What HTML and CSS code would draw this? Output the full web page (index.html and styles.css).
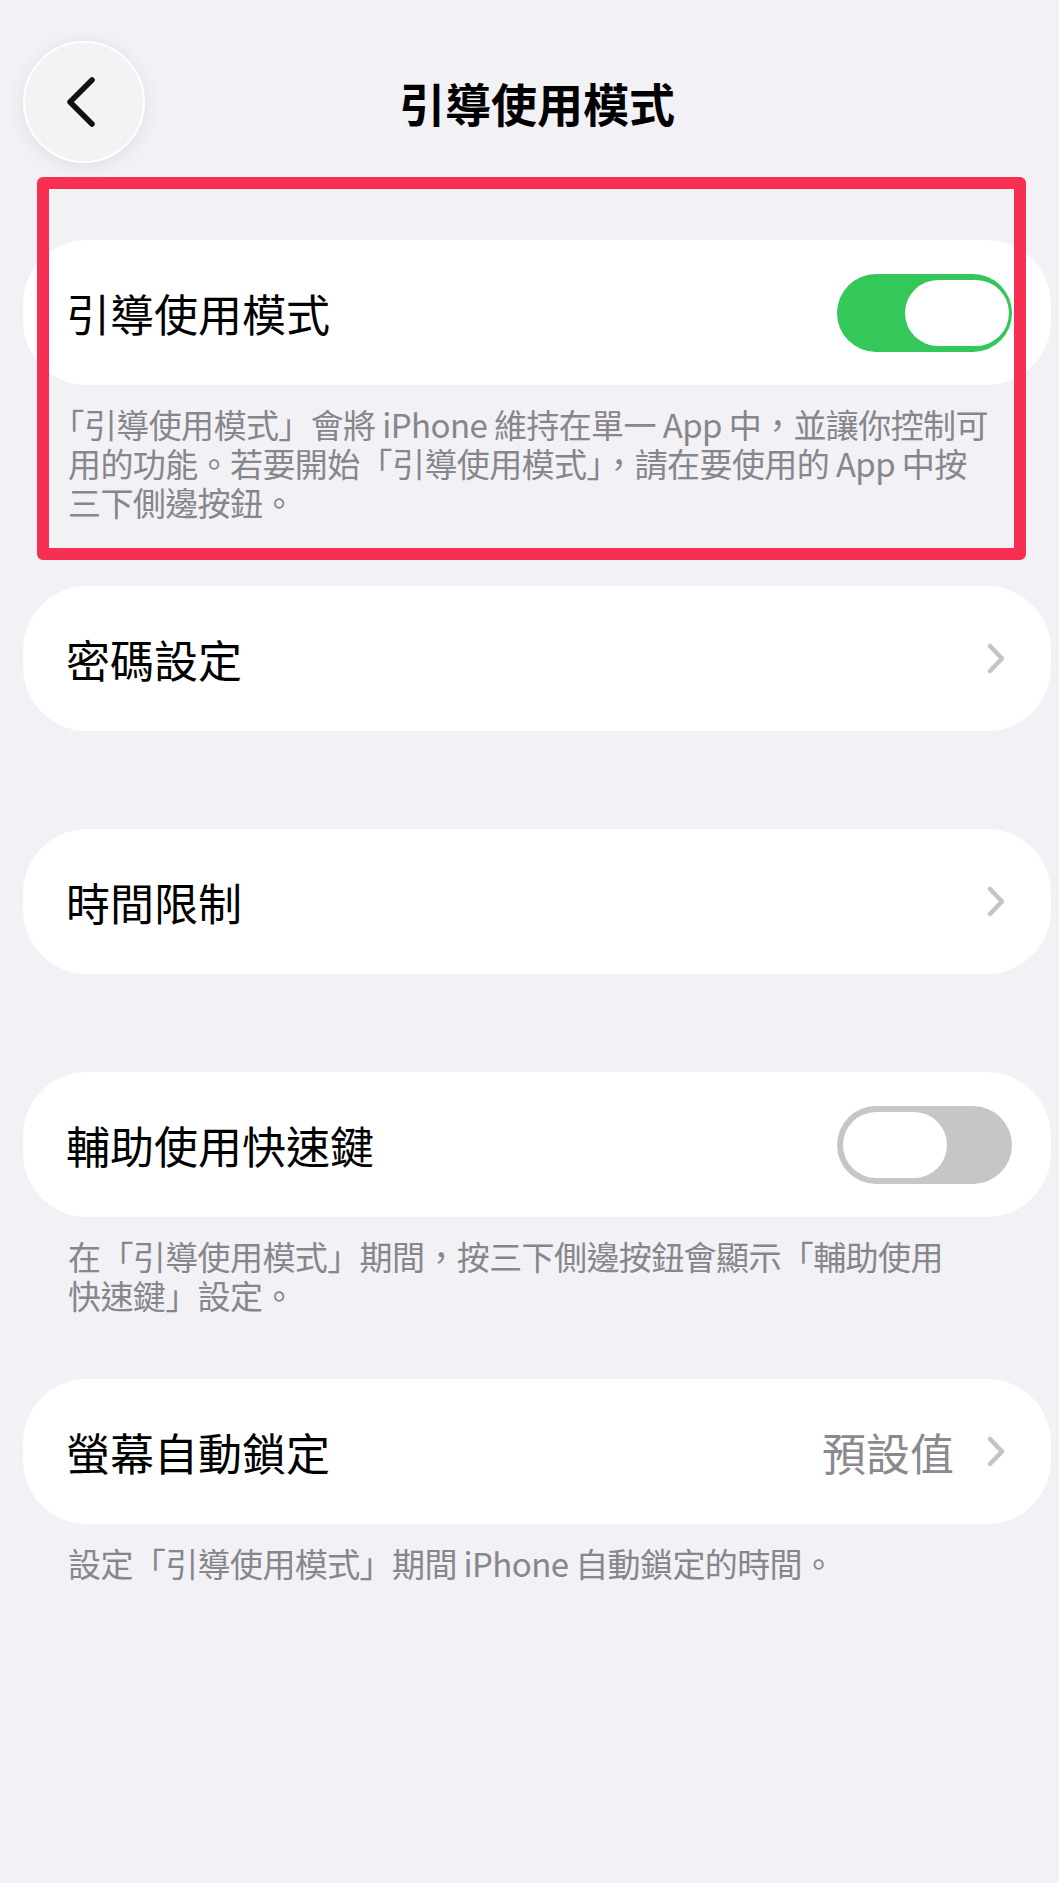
FILE: index.html
```html
<!DOCTYPE html>
<html lang="zh-Hant">
<head>
  <meta charset="UTF-8">
  <meta name="viewport" content="width=device-width, initial-scale=1.0">
  <title>引導使用模式</title>
  <link rel="stylesheet" href="styles.css">
</head>
<body>

<div class="page">
  <header class="nav">
    <button class="back-btn" aria-label="返回">
      <svg width="30" height="50" viewBox="0 0 30 50"><path d="M26 3 L4 25 L26 47" /></svg>
    </button>
    <h1>引導使用模式</h1>
  </header>

  <section class="group has-footer">
    <div class="card">
      <span class="label">引導使用模式</span>
      <span class="switch on"><span class="knob"></span></span>
    </div>
    <p class="footer">「引導使用模式」會將 iPhone 維持在單一 App 中，並讓你控制可<br>用的功能。若要開始「引導使用模式」，請在要使用的 App 中按<br>三下側邊按鈕。</p>
    <div class="mark"></div>
  </section>

  <section class="group">
    <div class="card">
      <span class="label">密碼設定</span>
      <svg class="chevron" viewBox="0 0 18 31"><path d="M3 3 L15 15.5 L3 28" /></svg>
    </div>
  </section>

  <section class="group">
    <div class="card">
      <span class="label">時間限制</span>
      <svg class="chevron" viewBox="0 0 18 31"><path d="M3 3 L15 15.5 L3 28" /></svg>
    </div>
  </section>

  <section class="group has-footer">
    <div class="card">
      <span class="label">輔助使用快速鍵</span>
      <span class="switch"><span class="knob"></span></span>
    </div>
    <p class="footer">在「引導使用模式」期間，按三下側邊按鈕會顯示「輔助使用<br>快速鍵」設定。</p>
  </section>

  <section class="group has-footer">
    <div class="card">
      <span class="label">螢幕自動鎖定</span>
      <span class="value">預設值</span>
      <svg class="chevron" viewBox="0 0 18 31"><path d="M3 3 L15 15.5 L3 28" /></svg>
    </div>
    <p class="footer">設定「引導使用模式」期間 iPhone 自動鎖定的時間。</p>
  </section>
</div>

</body>
</html>
```

FILE: styles.css
```css
body {
  margin: 0;
  background: #f1f1f6;
  font-family: "Noto Sans CJK TC", "Noto Sans", sans-serif;
  color: #000;
}
.page {
  width: 1028px;
  margin-left: 23px;
  padding-top: 41px;
}
.nav {
  display: grid;
  grid-template-columns: 122px 1fr 122px;
  align-items: center;
  margin-bottom: 77px;
}
.back-btn {
  width: 122px;
  height: 122px;
  box-sizing: border-box;
  border-radius: 50%;
  background: #f3f3f5;
  border: 2px solid #fff;
  box-shadow: 0 3px 20px rgba(0, 0, 0, 0.08);
  display: flex;
  align-items: center;
  justify-content: center;
  padding: 0 7px 0 0;
}
.back-btn path {
  fill: none;
  stroke: #111;
  stroke-width: 5.5;
  stroke-linecap: round;
  stroke-linejoin: round;
}
.nav h1 {
  margin: 0;
  text-align: center;
  font-size: 46px;
  font-weight: 700;
  line-height: 1;
}
.group {
  position: relative;
  margin-bottom: 98px;
}
.group.has-footer {
  margin-bottom: 64px;
}
.card {
  height: 145px;
  box-sizing: border-box;
  background: #fff;
  border-radius: 64px;
  display: flex;
  align-items: center;
  padding: 0 39px 0 43px;
}
.label {
  flex: 1;
  font-size: 44px;
}
.value {
  font-size: 44px;
  color: #8a8a8e;
  margin-right: 33px;
}
.chevron {
  width: 18px;
  height: 31px;
  margin-right: 7px;
}
.chevron path {
  fill: none;
  stroke: #c4c4c7;
  stroke-width: 4.5;
  stroke-linecap: round;
  stroke-linejoin: round;
}
.switch {
  width: 175px;
  height: 78px;
  box-sizing: border-box;
  border-radius: 39px;
  background: #c6c6c8;
  display: flex;
  align-items: center;
  padding: 0 6px;
}
.switch.on {
  background: #34c759;
  justify-content: flex-end;
  padding-right: 3px;
}
.knob {
  width: 104px;
  height: 66px;
  border-radius: 33px;
  background: #fff;
}
.footer {
  margin: 0;
  padding: 20px 10px 0 45px;
  font-size: 33px;
  line-height: 39px;
  letter-spacing: -0.6px;
  color: #86868b;
  text-spacing-trim: trim-start;
}
/* red annotation frame drawn over the first group */
.mark {
  position: absolute;
  top: -63px;
  left: 14px;
  right: 25px;
  bottom: -38px;
  border: 12px solid #f72f52;
  border-radius: 6px;
  pointer-events: none;
}
```
